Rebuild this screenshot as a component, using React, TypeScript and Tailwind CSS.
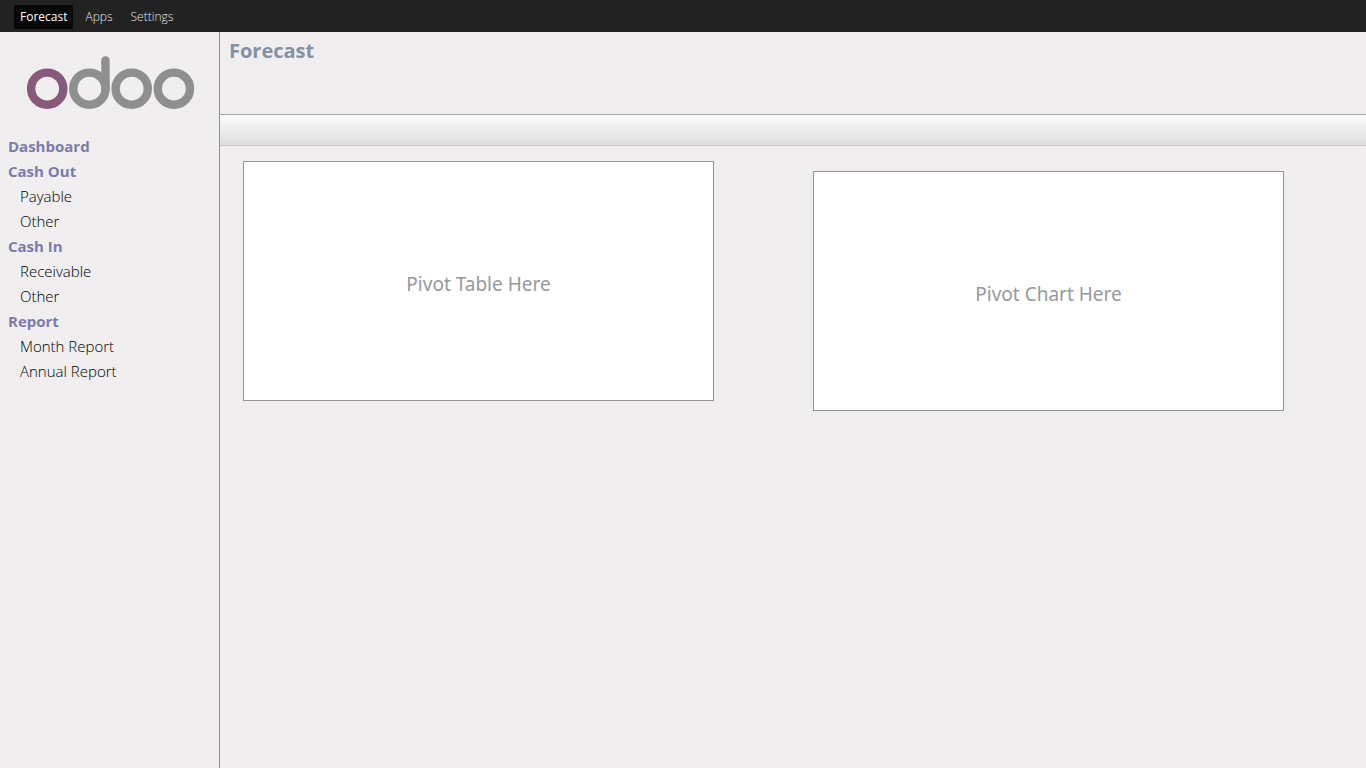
const tabs = ["Forecast", "Apps", "Settings"];

const menu = [
  { title: "Dashboard", items: [] },
  { title: "Cash Out", items: ["Payable", "Other"] },
  { title: "Cash In", items: ["Receivable", "Other"] },
  { title: "Report", items: ["Month Report", "Annual Report"] },
];

function Logo() {
  return (
    <svg
      role="img"
      aria-label="odoo"
      viewBox="0 0 168 54"
      className="h-[54px] w-[168px]"
      fill="none"
      strokeWidth="8.4"
    >
      <circle cx="20.2" cy="32.7" r="16.1" stroke="#875a7b" />
      <g stroke="#8f8f8f">
        <circle cx="62.4" cy="32.7" r="16.1" />
        <path d="M78.5 32.7V4.4" strokeLinecap="round" />
        <circle cx="104.7" cy="32.7" r="16.1" />
        <circle cx="146.9" cy="32.7" r="16.1" />
      </g>
    </svg>
  );
}

function TopBar() {
  return (
    <nav className="flex h-8 items-center gap-1.5 bg-[#222222] px-3.5 pt-px">
      {tabs.map((tab, i) => (
        <a
          key={tab}
          href="#"
          aria-current={i === 0 ? "page" : undefined}
          className={
            i === 0
              ? "bg-[#080808] px-1.5 text-[12px] leading-6 text-white"
              : "px-1.5 text-[12px] leading-6 font-light text-[#e4e4e4]"
          }
        >
          {tab}
        </a>
      ))}
    </nav>
  );
}

function Sidebar() {
  return (
    <aside className="w-[220px] shrink-0 border-r border-[#8f8f8f]">
      <div className="px-[27px] pt-6 pb-6">
        <Logo />
      </div>
      <ul className="px-2 text-[15px] leading-[25px]">
        {menu.map(({ title, items }) => (
          <li key={title}>
            <a href="#" className="font-bold text-[#7c7bad]">
              {title}
            </a>
            {items.length > 0 && (
              <ul className="pl-3 font-light text-black">
                {items.map((item) => (
                  <li key={item}>
                    <a href="#">{item}</a>
                  </li>
                ))}
              </ul>
            )}
          </li>
        ))}
      </ul>
    </aside>
  );
}

function Placeholder({ label, className }: { label: string; className: string }) {
  return (
    <section
      className={`flex h-60 items-center justify-center border border-[#929496] bg-white pt-1.5 font-['Noto_Sans',sans-serif] text-[19px] text-[#96999c] ${className}`}
    >
      {label}
    </section>
  );
}

export default function App() {
  return (
    <div className="flex min-h-screen flex-col bg-[#f0eeee] font-['Open_Sans',sans-serif]">
      <TopBar />
      <div className="flex flex-1">
        <Sidebar />
        <main className="min-w-0 flex-1">
          <header className="h-[82px] px-[9px] pt-1">
            <h1 className="text-[20px] leading-[30px] font-bold text-[#8591a5]">Forecast</h1>
          </header>
          <div className="h-8 border-t border-b border-t-[#a8a4a4] border-b-[#c8c8c8] bg-linear-to-b from-[#fcfcfc] to-[#dedede]" />
          <div className="grid grid-cols-2 gap-[99px] pt-[15px] pr-[82px] pl-[23px]">
            <Placeholder label="Pivot Table Here" className="mt-0" />
            <Placeholder label="Pivot Chart Here" className="mt-2.5" />
          </div>
        </main>
      </div>
    </div>
  );
}
